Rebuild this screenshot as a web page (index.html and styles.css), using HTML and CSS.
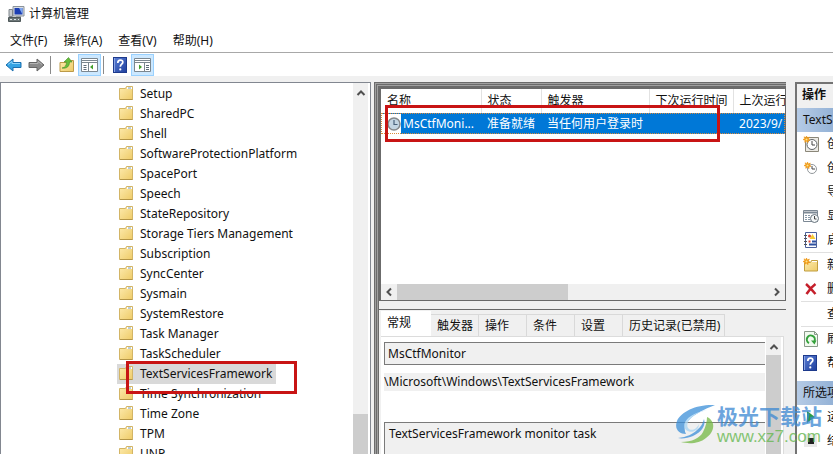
FILE: index.html
```
<!DOCTYPE html>
<html lang="zh-CN">
<head>
    <meta charset="UTF-8">
    <meta name="viewport" content="width=device-width, initial-scale=1.0">
    <title>计算机管理</title>
    <link rel="stylesheet" href="styles.css">
</head>
<body>

    <!-- Shared icons -->
    <svg class="sprite" aria-hidden="true">
        <defs>
            <linearGradient id="folderFill" x1="0" y1="0" x2="1" y2="1">
                <stop offset="0" stop-color="#fdebae"/>
                <stop offset="1" stop-color="#eecb68"/>
            </linearGradient>
            <linearGradient id="blueFill" x1="0" y1="0" x2="1" y2="1">
                <stop offset="0" stop-color="#5b7fd6"/>
                <stop offset="1" stop-color="#1f3f9c"/>
            </linearGradient>
        </defs>
        <symbol id="folder" viewBox="0 0 14 14">
            <path d="M.5 2.500h6l1-2h6v13H.5z" fill="url(#folderFill)" stroke="#d3b566"/>
            <path d="M8 1h5v2H8z" fill="#fff"/>
            <path d="M9 2h3" stroke="#7b9cae"/>
            <path d="M1 13.500h12.500" stroke="#b39546"/>
        </symbol>
        <symbol id="up" viewBox="0 0 10 8">
            <path d="M1.500 6L5 2.500 8.500 6" fill="none" stroke="#505050" stroke-width="2"/>
        </symbol>
        <symbol id="help" viewBox="0 0 14 16">
            <rect x=".5" y=".5" width="13" height="15" fill="url(#blueFill)" stroke="#1d3a8c"/>
            <path d="M1.500 1v14" stroke="#8aa4e4"/>
            <path d="M4.800 6c0-4 5.400-3.500 5-.6C9.600 7.200 7.300 7.400 7.300 9.800" fill="none" stroke="#fff" stroke-width="1.700"/>
            <circle cx="7.300" cy="12.400" r="1.100" fill="#fff"/>
        </symbol>
        <symbol id="clock" viewBox="0 0 14 14">
            <circle cx="7" cy="7" r="6" fill="#c3d5e2" stroke="#85888b" stroke-width="1.500"/>
            <path d="M7 3v4.500h3.500" fill="none" stroke="#49627b" stroke-width="1.200"/>
        </symbol>
        <symbol id="spark" viewBox="0 0 10 10">
            <path d="M5 0l1 3 3-1.500L7.600 4.400 10 6 7.300 6.400 7 9.500 5 7.200 2.500 9 3 6.200 0 5l2.700-1L1.500 1.200 4 2.700z" fill="#f09a17" stroke="#f09a17"/>
            <circle cx="5" cy="5" r="1.500" fill="#fde48a"/>
        </symbol>
    </svg>

    <!-- Title bar -->
    <header class="titlebar">
        <svg width="17" height="16" viewBox="0 0 17 16">
            <path d="M5 .5h11v9.500H5z" fill="#d9dde2" stroke="#8a929a"/>
            <path d="M6.500 2h8v6.500h-8z" fill="#1c3fb3"/>
            <path d="M11 2h3.500v6.500z" fill="#7fa6ee"/>
            <path d="M8 10h5v2H8z" fill="#9da3a8"/>
            <path d="M1 3.500h3.500v7H1z" fill="#c5c9cd" stroke="#80878d"/>
            <path d="M.5 11.500h12v4H.5z" fill="#6d7778" stroke="#4d5758"/>
            <path d="M2 13.500h2M6 13.500h2M10 13.500h1" stroke="#dfe6e8"/>
        </svg>
        <span>计算机管理</span>
    </header>

    <!-- Menu -->
    <nav class="menu">
        <button>文件(F)</button>
        <button>操作(A)</button>
        <button>查看(V)</button>
        <button>帮助(H)</button>
    </nav>

    <!-- Toolbar -->
    <div class="toolbar">
        <button class="tool" aria-label="后退">
            <svg width="17" height="14" viewBox="0 0 17 14"><path d="M1 7l7-6v3.500h8v5H8V13z" fill="#35a4e4" stroke="#1b6fae"/><path d="M3 6.500l4-3v2h8" fill="none" stroke="#8fd6fb"/></svg>
        </button>
        <button class="tool" aria-label="前进">
            <svg width="17" height="14" viewBox="0 0 17 14"><path d="M16 7L9 1v3.500H1v5h8V13z" fill="#8b8b8b" stroke="#666"/><path d="M2 5.500h8v-2l4 3" fill="none" stroke="#b5b5b5"/></svg>
        </button>
        <span class="divider"></span>
        <button class="tool" aria-label="上一级">
            <svg width="16" height="16" viewBox="0 0 16 16"><path d="M1 5.500h6l1-2h6.500v11H1z" fill="url(#folderFill)" stroke="#bc9a48"/><path d="M3 11c3.500-.5 4.500-3 4.500-6H5l4.500-4.500L13 5h-2.500C10.500 9 8 12 3 11z" fill="#67bd3b" stroke="#418f26" stroke-width=".6"/></svg>
        </button>
        <button class="tool active" aria-label="显示/隐藏控制台树">
            <svg width="17" height="14" viewBox="0 0 17 14"><path d="M.5.500h16v13H.5z" fill="#fff" stroke="#7b8790"/><path d="M1 2.500h15M1 4.500h15M7.500 5v8" stroke="#7b8790"/><path d="M2.500 7.500h3M2.500 9.500h3M2.500 11.500h3" stroke="#5d6b78"/><path d="M12 6.500v5L9 9z" fill="#43a02c"/></svg>
        </button>
        <span class="divider"></span>
        <button class="tool" aria-label="帮助"><svg width="14" height="16"><use href="#help"/></svg></button>
        <button class="tool active" aria-label="显示/隐藏操作窗格">
            <svg width="17" height="14" viewBox="0 0 17 14"><path d="M.5.500h16v13H.5z" fill="#fff" stroke="#7b8790"/><path d="M1 2.500h15M1 4.500h15M10.500 5v8" stroke="#7b8790"/><path d="M12 7.500h3M12 9.500h3M12 11.500h3" stroke="#5d6b78"/><path d="M5 6.500v5L8 9z" fill="#43a02c"/></svg>
        </button>
    </div>

    <main class="console">

        <!-- Console tree -->
        <section class="tree">
            <ul class="tree-list">
                <li><svg><use href="#folder"/></svg>Setup</li>
                <li><svg><use href="#folder"/></svg>SharedPC</li>
                <li><svg><use href="#folder"/></svg>Shell</li>
                <li><svg><use href="#folder"/></svg>SoftwareProtectionPlatform</li>
                <li><svg><use href="#folder"/></svg>SpacePort</li>
                <li><svg><use href="#folder"/></svg>Speech</li>
                <li><svg><use href="#folder"/></svg>StateRepository</li>
                <li><svg><use href="#folder"/></svg>Storage Tiers Management</li>
                <li><svg><use href="#folder"/></svg>Subscription</li>
                <li><svg><use href="#folder"/></svg>SyncCenter</li>
                <li><svg><use href="#folder"/></svg>Sysmain</li>
                <li><svg><use href="#folder"/></svg>SystemRestore</li>
                <li><svg><use href="#folder"/></svg>Task Manager</li>
                <li><svg><use href="#folder"/></svg>TaskScheduler</li>
                <li class="selected"><svg><use href="#folder"/></svg>TextServicesFramework<span class="mark tree-mark"></span></li>
                <li><svg><use href="#folder"/></svg>Time Synchronization</li>
                <li><svg><use href="#folder"/></svg>Time Zone</li>
                <li><svg><use href="#folder"/></svg>TPM</li>
                <li><svg><use href="#folder"/></svg>UNP</li>
            </ul>
            <div class="scroll-y">
                <svg width="10" height="8"><use href="#up"/></svg>
                <div class="track"></div>
                <div class="thumb tree-thumb"></div>
            </div>
        </section>

        <!-- Task list and details -->
        <section class="center">
            <div class="tasks">
                <table>
                    <colgroup>
                        <col class="col-name"><col class="col-state"><col class="col-trigger"><col class="col-next"><col>
                    </colgroup>
                    <thead>
                        <tr><th>名称</th><th>状态</th><th>触发器</th><th>下次运行时间</th><th>上次运行</th></tr>
                    </thead>
                    <tbody>
                        <tr>
                            <td class="name"><div><svg width="14" height="14"><use href="#clock"/></svg><span>MsCtfMoni...</span></div></td>
                            <td>准备就绪</td>
                            <td>当任何用户登录时</td>
                            <td></td>
                            <td>2023/9/</td>
                        </tr>
                    </tbody>
                </table>
                <span class="mark task-mark"></span>
                <div class="scroll-x">
                    <svg width="8" height="10" viewBox="0 0 8 10"><path d="M6 1.500L2.500 5 6 8.500" fill="none" stroke="#505050" stroke-width="2"/></svg>
                    <div class="rail"><div class="thumb"></div></div>
                    <svg width="8" height="10" viewBox="0 0 8 10"><path d="M2 1.500L5.500 5 2 8.500" fill="none" stroke="#505050" stroke-width="2"/></svg>
                </div>
            </div>

            <div class="details">
                <div class="tabs">
                    <button class="current">常规</button>
                    <button>触发器</button>
                    <button>操作</button>
                    <button>条件</button>
                    <button>设置</button>
                    <button>历史记录(已禁用)</button>
                </div>
                <div class="sheet">
                    <div class="fields">
                        <input class="boxed" type="text" value="MsCtfMonitor" aria-label="名称" readonly>
                        <input class="plain" type="text" value="\Microsoft\Windows\TextServicesFramework" aria-label="位置" readonly>
                        <textarea aria-label="描述" readonly>TextServicesFramework monitor task</textarea>
                    </div>
                    <div class="scroll-y">
                        <svg width="10" height="8"><use href="#up"/></svg>
                        <div class="thumb"></div>
                    </div>
                </div>
            </div>
        </section>

        <!-- Actions -->
        <aside class="actions">
            <h2>操作</h2>
            <h3>TextServicesFramework</h3>
            <button>
                <svg viewBox="0 0 16 16"><path d="M2.500 1.500h13v14h-13z" fill="#eceae4" stroke="#8b8779"/><circle cx="9" cy="8.500" r="5" fill="#fff" stroke="#5f6468"/><path d="M9 5v4h3" fill="none" stroke="#444"/><use href="#spark" width="7" height="7"/></svg>创建基本任务</button>
            <button>
                <svg viewBox="0 0 16 16"><circle cx="9" cy="9" r="4.500" fill="#fff" stroke="#92979b"/><path d="M9 6v3h3" fill="none" stroke="#444"/><use href="#spark" x="1" y="2" width="7" height="7"/></svg>创建任务</button>
            <button><svg viewBox="0 0 16 16"></svg>导入任务</button>
            <button>
                <svg viewBox="0 0 16 16"><path d="M.5 2.500h14v11H.5z" fill="#fff" stroke="#7c8894"/><path d="M1 4.500h13" stroke="#7c8894" stroke-width="2"/><path d="M2 7.500h6M2 9.500h6M2 11.500h6" stroke="#8798a8" stroke-dasharray="2 1"/><circle cx="11.500" cy="10.500" r="4" fill="#f4f7f8" stroke="#66727b"/><path d="M11.500 8v3h2" fill="none" stroke="#444"/></svg>显示所有正在运行的任务</button>
            <button>
                <svg viewBox="0 0 16 16"><path d="M2.500.500h11v15h-11z" fill="#fff" stroke="#4b5f9a"/><path d="M1 3.500h3M1 6.500h3M1 9.500h3M1 12.500h3" stroke="#555"/><path d="M9.500 2l3 5h-6z" fill="#f7ca32"/><circle cx="6.500" cy="4" r="1.500" fill="#d84132"/><path d="M5.500 8.500h2v2h-2z" fill="#d84132"/><path d="M9 9.500h4M6 12.500h7" stroke="#2d4f9f" stroke-width="2"/></svg>启用所有任务历史记录</button>
            <hr>
            <button>
                <svg viewBox="0 0 16 16"><path d="M1.500 5.500h6l1-2h6v10.500h-13z" fill="url(#folderFill)" stroke="#c19e3f"/><path d="M9 4.500h5" stroke="#fff"/><use href="#spark" y="1" width="7" height="7"/></svg>新文件夹...</button>
            <button>
                <svg viewBox="0 0 16 16"><path d="M3 3c3 2.500 6 6 9.500 10M12.500 3C9 5.500 6 9 3.500 13" fill="none" stroke="#c51f2b" stroke-width="2.500"/></svg>删除文件夹</button>
            <hr>
            <button><svg viewBox="0 0 16 16"></svg>查看</button>
            <hr>
            <button>
                <svg viewBox="0 0 16 16"><path d="M1.500.500h10l3 3v12h-13z" fill="#f1faef" stroke="#8a9a8a"/><path d="M11.500.500v3h3" fill="none" stroke="#8a9a8a"/><path d="M6 12A4 4 0 1 1 11.500 10" fill="none" stroke="#34a13b" stroke-width="2"/><path d="M8 9.500h5.500l-2 4z" fill="#34a13b"/></svg>刷新</button>
            <button><svg viewBox="0 0 16 16"><use href="#help" width="14" height="16"/></svg>帮助</button>
            <h3 class="second">所选项</h3>
            <button><svg viewBox="0 0 16 16"><path d="M4 2l8 6-8 6z" fill="#2b9d43"/></svg>运行</button>
            <button><svg viewBox="0 0 16 16"><path d="M1 1h13v13H1z" fill="#e9e9e9"/><path d="M5 5h6v6H5z" fill="#222"/></svg>结束</button>
        </aside>
    </main>

    <!-- Site watermark -->
    <div class="watermark">
        <svg width="42" height="42" viewBox="0 0 42 42">
            <path d="M41 1C24 0 7 7 3 17c-3 8 2 13 9 13-4-7 0-18 29-29z" fill="#3b8fd9"/>
            <path d="M33 6C19 9 11 18 14 24c3 4 9 1 11-4 0 7-8 10-13 6-5-6 1-16 21-20z" fill="#a5d4f4"/>
            <path d="M33 13c9 4 8 15-1 21-7 6-18 6-25 4 11 0 19-4 22-10 3-6 4-11 4-15z" fill="#74b843"/>
            <path d="M30 15c2 6-2 13-11 17-5 2-11 3-15 2 9-1 15-4 19-8 4-3 6-7 7-11z" fill="#3b8fd9"/>
        </svg>
        <div>
            <strong>极光下载站</strong>
            <span>www.xz7.com</span>
        </div>
    </div>

</body>
</html>
```
FILE: styles.css
```
* {
    box-sizing: border-box;
}

body {
    margin: 0;
    height: 100vh;
    display: flex;
    flex-direction: column;
    overflow: hidden;
    position: relative;
    background-color: #f0f0f0;
    color: #111;
    font-family: "Noto Sans", "Noto Sans CJK SC", sans-serif;
    font-size: 12px;
    line-height: 20px;
}

button,
input,
textarea {
    font: inherit;
    color: inherit;
    margin: 0;
    padding: 0;
    border: none;
    border-radius: 0;
    background: none;
}

svg {
    flex: none;
    display: block;
}

.sprite {
    position: absolute;
    width: 0;
    height: 0;
}

/* Title bar and menu */
.titlebar {
    display: flex;
    align-items: center;
    gap: 4px;
    height: 28px;
    padding-left: 8px;
    background-color: #fff;
}

.menu {
    display: flex;
    gap: 16px;
    height: 25px;
    padding: 2px 10px 0;
    background-color: #fff;
    border-bottom: 1px solid #a8a8a8;
}

/* Toolbar */
.toolbar {
    display: flex;
    align-items: center;
    height: 23px;
    padding-left: 2px;
    background-color: #fff;
}

.tool {
    display: flex;
    align-items: center;
    justify-content: center;
    width: 23px;
    height: 22px;
}

.tool.active {
    background-color: #cce8ff;
    border: 1px solid #99d1ff;
}

.divider {
    width: 1px;
    height: 18px;
    margin: 0 4px 0 2px;
    background-color: #8a8a8a;
}

/* Three panes */
.console {
    flex: 1;
    min-height: 0;
    display: flex;
    margin-top: 6px;
}

.tree {
    flex: 368 1 0;
    min-width: 0;
    display: flex;
    overflow: hidden;
    padding-right: 2px;
    background-color: #fff;
    border: 1px solid #828790;
    border-bottom: none;
}

.tree-list {
    flex: 1;
    margin: 0;
    padding: 1px 0 0 116px;
    list-style: none;
}

.tree-list li {
    display: flex;
    width: max-content;
    height: 20px;
    padding: 0 4px 0 2px;
    gap: 7px;
}

.tree-list svg {
    width: 14px;
    height: 14px;
    margin-top: 2px;
}

.tree-list .selected {
    position: relative;
    background-color: #d9d9d9;
}

/* Red frames around the important items */
.mark {
    position: absolute;
    z-index: 1;
    border: 3px solid #c81414;
}

.tree-mark {
    top: -3px;
    left: 9px;
    width: 171px;
    height: 33px;
}

.task-mark {
    top: 16px;
    left: 4px;
    width: 335px;
    height: 37px;
}

/* Scroll bars */
.scroll-y {
    display: flex;
    flex-direction: column;
    align-items: center;
    width: 15px;
    padding-top: 6px;
    background-color: #f0f0f0;
}

.scroll-y .track {
    flex: 317;
}

.scroll-y .thumb {
    flex: 1;
    width: 100%;
    margin-top: 4px;
    background-color: #cdcdcd;
}

.scroll-y .tree-thumb {
    flex: 40;
    margin-top: 0;
}

.scroll-x {
    display: flex;
    align-items: center;
    gap: 4px;
    height: 16px;
    padding: 0 4px;
    background-color: #f0f0f0;
}

.rail {
    flex: 1;
    height: 100%;
}

.rail .thumb {
    width: 46%;
    height: 100%;
    background-color: #cdcdcd;
}

/* Centre pane */
.center {
    flex: 406 1 0;
    min-width: 0;
    display: flex;
    flex-direction: column;
    margin: 0 9px 0 3px;
    padding: 7px 0 0 7px;
    background-color: #6b6b6b;
    box-shadow: inset 1px 1px #6b6b6b, inset 2px 2px #a0a0a0, inset 3px 3px #6b6b6b, inset 4px 4px #a0a0a0, inset 5px 5px #6b6b6b;
}

.tasks {
    flex: 212 1 0;
    min-height: 0;
    display: flex;
    flex-direction: column;
    justify-content: space-between;
    position: relative;
    background-color: #fff;
    border-right: 1px solid #696969;
    border-bottom: 1px solid #696969;
}

table {
    width: 100%;
    table-layout: fixed;
    border-collapse: collapse;
}

.col-name {
    width: 100px;
}

.col-state {
    width: 60px;
}

.col-trigger {
    width: 108px;
}

.col-next {
    width: 84px;
}

th,
td {
    padding: 0 0 0 6px;
    font-weight: normal;
    text-align: left;
    white-space: nowrap;
    overflow: hidden;
}

th {
    height: 24px;
    border-right: 1px solid #e2e2e2;
}

th:last-child {
    border-right: none;
}

tbody tr {
    height: 21px;
    background-color: #0078d7;
    color: #fff;
    outline: 1px dotted #d98a3c;
    outline-offset: -1px;
}

td.name {
    padding: 0;
}

.name div {
    display: flex;
    align-items: center;
    gap: 2px;
    padding-left: 6px;
    background: linear-gradient(to right, #fff 20px, #0078d7 20px);
}

/* Task details */
.details {
    flex: 143 1 0;
    min-height: 0;
    display: flex;
    flex-direction: column;
    margin-left: -2px;
    padding: 10px 2px 0;
    background: linear-gradient(#f0f0f0 8px, #696969 8px, #696969 9px, #f0f0f0 9px);
}

.tabs {
    display: flex;
    align-items: flex-end;
    height: 25px;
}

.tabs button {
    flex: none;
    min-width: 48px;
    height: 22px;
    padding: 0 4px 0 6px;
    border: 1px solid #d9d9d9;
    border-width: 1px 1px 0 0;
    text-align: left;
}

.tabs .current {
    width: 50px;
    height: 25px;
    padding-bottom: 2px;
    background-color: #fff;
    border: none;
}

.sheet {
    flex: 1;
    min-height: 0;
    display: flex;
    padding-right: 2px;
    background-color: #fff;
    border: 1px solid #dcdcdc;
    border-width: 1px 1px 0 0;
}

.fields {
    flex: 1;
    min-width: 0;
    display: flex;
    flex-direction: column;
    padding: 5px 1px 0 3px;
}

.fields input,
.fields textarea {
    width: 100%;
    background-color: #f0f0f0;
}

.fields .boxed {
    height: 23px;
    padding-left: 3px;
    border: 1px solid #7a7a7a;
    border-right: none;
}

.fields .plain {
    height: 18px;
    margin: 8px 0 31px;
}

.fields textarea {
    flex: 1;
    min-height: 0;
    padding: 1px 4px;
    border: 1px solid #7a7a7a;
    border-width: 1px 0 0 1px;
    resize: none;
    overflow: hidden;
}

/* Actions pane */
.actions {
    flex: none;
    width: 38px;
    overflow: hidden;
    background-color: #fff;
    border: 2px solid #737373;
    border-width: 2px 0 0 2px;
}

.actions h2,
.actions h3 {
    margin: 0;
    height: 24px;
    padding-left: 5px;
    font-size: 12px;
    line-height: 22px;
    white-space: nowrap;
}

.actions h2 {
    background-color: #f0f0f0;
}

.actions h3 {
    padding-left: 6px;
    font-weight: normal;
    line-height: 24px;
    background: linear-gradient(to right, #b5cbe6, #94b2d6);
}

.actions .second {
    margin-top: 6px;
}

.actions button {
    display: flex;
    align-items: center;
    gap: 8px;
    height: 24px;
    padding-left: 6px;
    white-space: nowrap;
}

.actions button svg {
    width: 16px;
    height: 16px;
}

.actions hr {
    height: 1px;
    margin: 0 0 0 4px;
    border: none;
    background-color: #e0e0e0;
}

/* Watermark */
.watermark {
    position: absolute;
    right: 11px;
    bottom: 8px;
    z-index: 2;
    display: flex;
    gap: 1px;
    opacity: 0.75;
}

.watermark strong,
.watermark span {
    display: block;
}

.watermark strong {
    font-size: 21px;
    line-height: 24px;
    color: #3b87d2;
}

.watermark span {
    font-family: "Liberation Sans", sans-serif;
    font-size: 17px;
    line-height: 18px;
    color: #5fb548;
}
```
